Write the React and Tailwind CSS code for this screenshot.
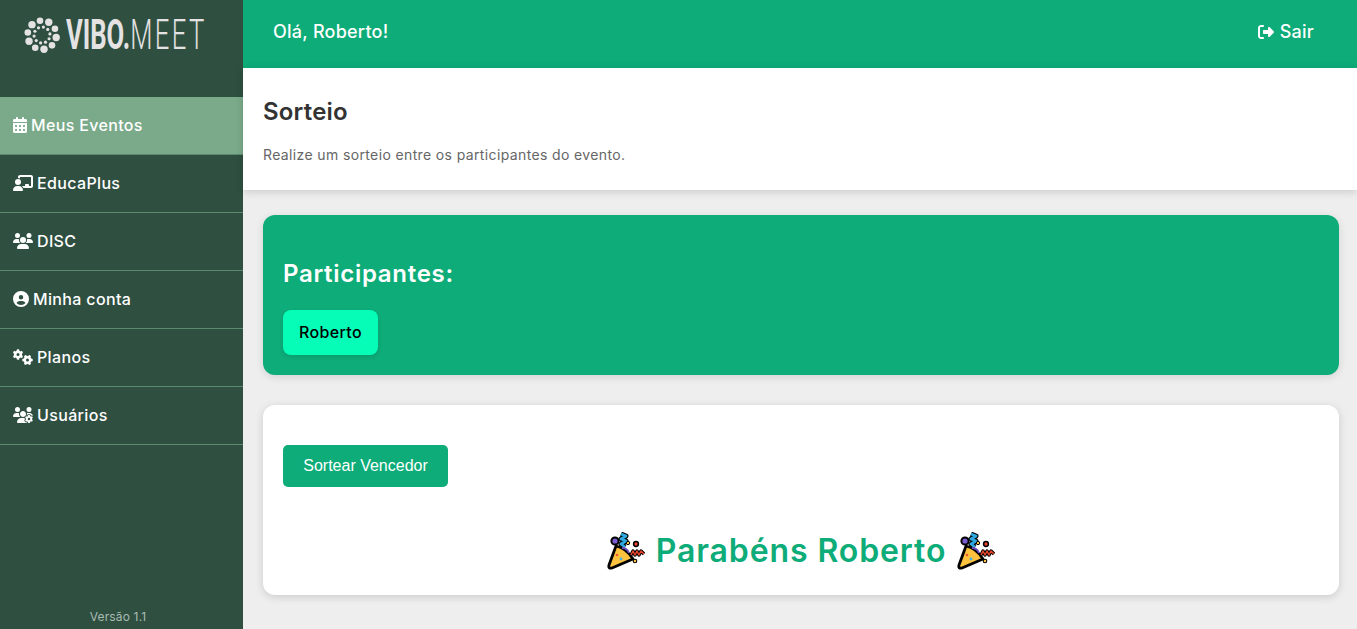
import React from "react";
import {
  FaCalendarDays,
  FaChalkboardUser,
  FaUsers,
  FaCircleUser,
  FaGears,
  FaUsersGear,
  FaRightFromBracket,
} from "react-icons/fa6";

const menu = [
  { label: "Meus Eventos", icon: FaCalendarDays, iconClass: "w-[14px] h-4", active: true },
  { label: "EducaPlus", icon: FaChalkboardUser, iconClass: "w-5 h-4" },
  { label: "DISC", icon: FaUsers, iconClass: "w-5 h-4" },
  { label: "Minha conta", icon: FaCircleUser, iconClass: "w-4 h-4" },
  { label: "Planos", icon: FaGears, iconClass: "w-5 h-4" },
  { label: "Usuários", icon: FaUsersGear, iconClass: "w-5 h-4" },
];

const LogoMark = () => {
  const outer = [10, 46, 82, 118, 154, 190, 226, 262, 298, 334];
  const inner = [28, 64, 100, 136, 172, 208, 244, 280, 316, 352];
  return (
    <svg viewBox="0 0 36 36" className="w-9 h-9 shrink-0">
      {outer.map((a, i) => (
        <circle
          key={a}
          cx={18 + 14.4 * Math.cos((a * Math.PI) / 180)}
          cy={18 + 14.4 * Math.sin((a * Math.PI) / 180)}
          r={i % 2 ? 3.3 : 3.7}
          fill="#e4e2e2"
        />
      ))}
      {inner.map((a) => (
        <circle
          key={a}
          cx={18 + 8 * Math.cos((a * Math.PI) / 180)}
          cy={18 + 8 * Math.sin((a * Math.PI) / 180)}
          r={1.6}
          fill="#e4e2e2"
        />
      ))}
    </svg>
  );
};

const Party = () => (
  <svg viewBox="0 0 38 38" className="w-[38px] h-[38px] shrink-0">
    <path d="M9 14 Q19 16 26 27 L5 36 Q1 37 2 33 Z" fill="#fdc23e" stroke="#000" strokeWidth="2.8" strokeLinejoin="round" />
    <circle cx="14" cy="27" r="1.4" fill="#3fb5e8" />
    <circle cx="10" cy="23" r="1.3" fill="#f0562d" />
    <circle cx="8" cy="9" r="3.6" fill="#7a5bd0" stroke="#000" strokeWidth="2" />
    <path d="M14 2 L19 4 L14 7 L19 9 L14 12 L18 15" fill="none" stroke="#000" strokeWidth="5" strokeLinejoin="round" />
    <path d="M14 2 L19 4 L14 7 L19 9 L14 12 L18 15" fill="none" stroke="#2fa8e0" strokeWidth="2.8" strokeLinejoin="round" />
    <path d="M15 16 C19 16 21 18 22 21" fill="none" stroke="#6b4fc0" strokeWidth="1.8" />
    <circle cx="21" cy="11" r="1.7" fill="#fdc23e" stroke="#000" strokeWidth="1" />
    <circle cx="29" cy="12" r="2.4" fill="#e8452c" stroke="#000" strokeWidth="1.5" />
    <path d="M24 23 L26 19 L28 23 L30 19 L32 23 L34 19 L37 22" fill="none" stroke="#000" strokeWidth="3.4" strokeLinejoin="round" />
    <path d="M24 23 L26 19 L28 23 L30 19 L32 23 L34 19 L37 22" fill="none" stroke="#e8452c" strokeWidth="1.5" strokeLinejoin="round" />
    <circle cx="28" cy="29" r="1.8" fill="#fdc23e" stroke="#000" strokeWidth="1.1" />
  </svg>
);

export default function App() {
  return (
    <div className="flex h-screen overflow-hidden bg-[#eeeeee] font-['Inter','Liberation_Sans',sans-serif]">
      <aside className="w-[243px] shrink-0 flex flex-col bg-[#2f4f41] text-white">
        <div className="h-[97px] pl-6 pt-[17px]">
          <div className="flex items-center gap-[6px] h-9 text-[#e4e2e2] font-['Roboto',sans-serif] text-[42px] leading-none">
            <LogoMark />
            <span className="inline-block origin-left scale-x-[0.61] whitespace-nowrap">
              <span className="font-bold">VIBO.</span>
              <span className="font-light tracking-[4px]">MEET</span>
            </span>
          </div>
        </div>
        <nav>
          {menu.map((item) => {
            const Icon = item.icon;
            return (
              <a
                key={item.label}
                className={`flex items-center gap-1 h-[58px] pl-[13px] pb-[2px] border-b border-[#5a8a6e] text-[16px] font-[450] tracking-[0.35px] ${
                  item.active ? "bg-[#7aaa8a]" : ""
                }`}
              >
                <Icon className={item.iconClass} />
                <span>{item.label}</span>
              </a>
            );
          })}
        </nav>
        <div className="mt-auto pb-[3px] pr-[7px] text-center text-[12px] leading-[18px] tracking-[0.15px] text-[#a9bcb2]">Versão 1.1</div>
      </aside>

      <div className="flex-1 min-w-0 flex flex-col">
        <header className="h-[68px] shrink-0 bg-[#0dac78] text-white flex items-center justify-between pl-[30px] pr-[43px] pb-[5px] text-[18px] font-[450] tracking-[0.25px]">
          <span>Olá, Roberto!</span>
          <span className="flex items-center gap-[5px]">
            <FaRightFromBracket className="w-[18px] h-4" />
            Sair
          </span>
        </header>

        <section className="h-[122px] shrink-0 bg-white px-5 pt-[29px] shadow-[0_2px_8px_rgba(0,0,0,0.15)]">
          <h1 className="text-[24px] leading-[30px] font-semibold text-[#333333] tracking-[0.2px]">Sorteio</h1>
          <p className="mt-[19px] text-[14px] leading-[18px] text-[#666666] tracking-[0.37px]">
            Realize um sorteio entre os participantes do evento.
          </p>
        </section>

        <main className="pt-[25px] pl-5 pr-[18px] flex flex-col gap-[30px]">
          <div className="h-[160px] rounded-xl bg-[#0dac78] p-5 shadow-[0_2px_8px_rgba(0,0,0,0.12)]">
            <h2 className="mt-6 text-[24px] leading-[30px] font-semibold text-white tracking-[0.7px]">Participantes:</h2>
            <div className="mt-[21px] flex">
              <span className="h-[45px] w-[95px] pb-[1px] flex items-center justify-center rounded-lg bg-[#06fdb8] text-[16px] font-medium text-black tracking-[0.35px] shadow-[0_2px_4px_rgba(0,0,0,0.1)]">
                Roberto
              </span>
            </div>
          </div>

          <div className="h-[190px] rounded-xl bg-white px-5 pt-10 shadow-[0_2px_8px_rgba(0,0,0,0.15)]">
            <button className="h-[42px] w-[165px] rounded-[5px] bg-[#0dac78] text-white text-[16px] font-['Liberation_Sans',sans-serif]">
              Sortear Vencedor
            </button>
            <div className="mt-[44px] flex items-center justify-center gap-[11px] text-[#0dac78] text-[32px] leading-[40px] font-semibold tracking-[0.9px]">
              <Party />
              <span>Parabéns Roberto</span>
              <Party />
            </div>
          </div>
        </main>
      </div>
    </div>
  );
}
